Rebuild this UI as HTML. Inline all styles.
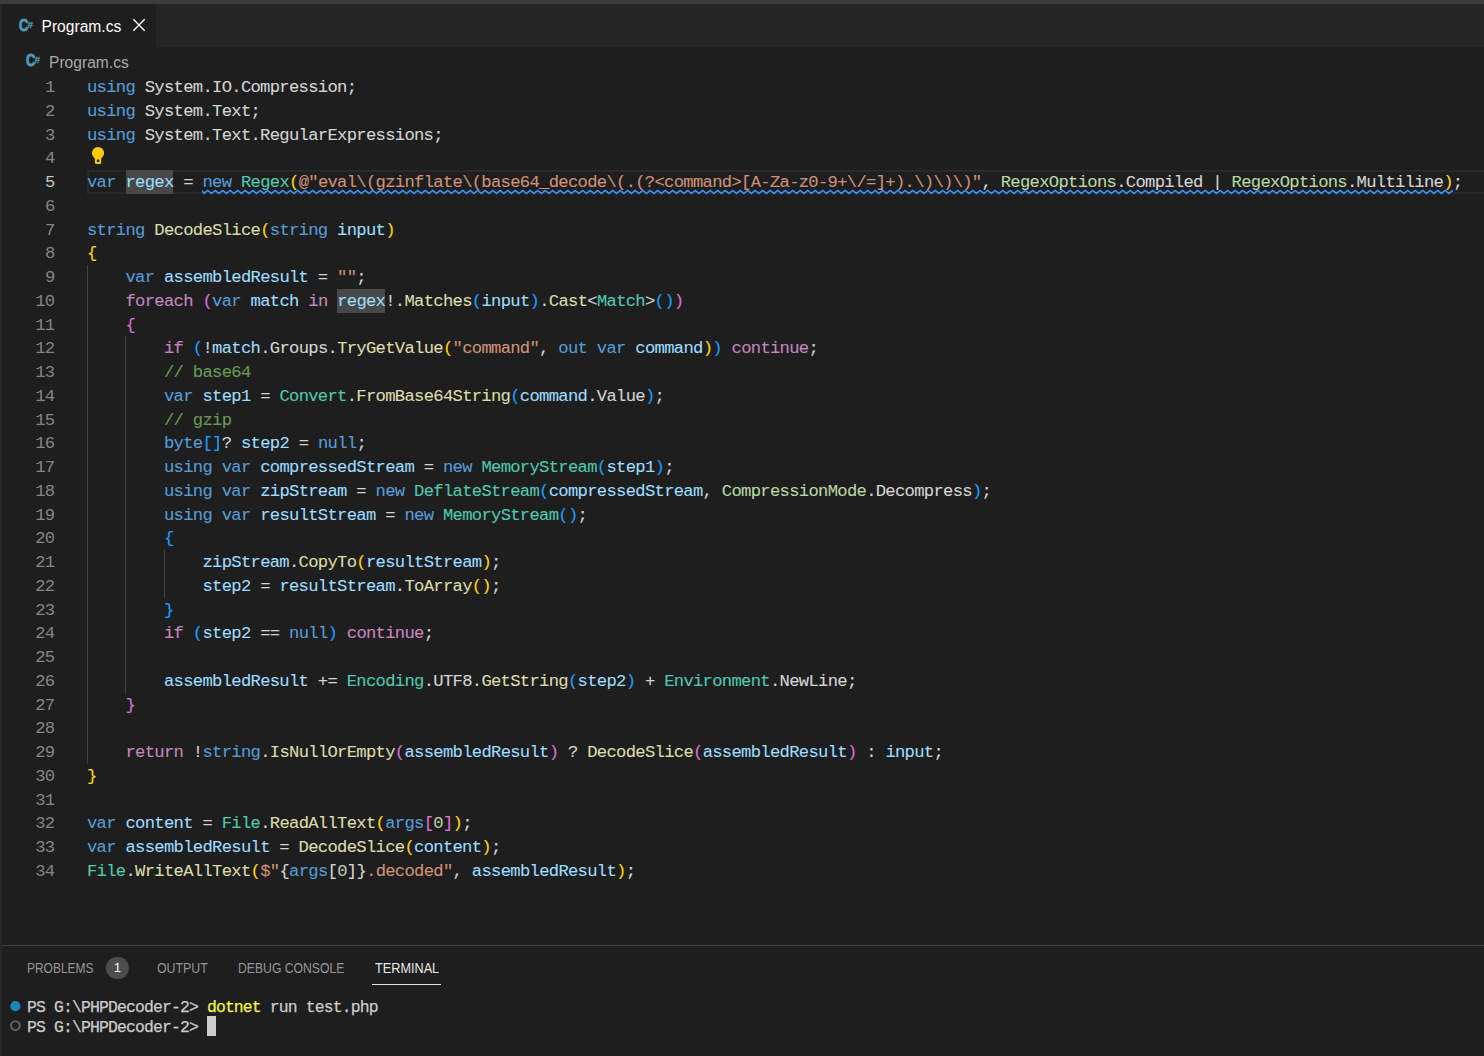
<!DOCTYPE html>
<html lang="en">
<head>
<meta charset="utf-8">
<title>Program.cs - PHPDecoder-2 - Visual Studio Code</title>
<style>
html,body{margin:0;padding:0;}
body{width:1484px;height:1056px;background:#1e1e1e;position:relative;overflow:hidden;font-family:"Liberation Sans",sans-serif;color:#d4d4d4;}
.abs{position:absolute;}
#topstrip{left:0;top:0;width:1484px;height:4px;background:#3c3c3c;}
#leftstrip{left:0;top:4px;width:2px;height:1052px;background:#252526;}
#tabbar{left:2px;top:4px;width:1482px;height:43px;background:#252526;}
#tab{left:2px;top:4px;width:154px;height:43px;background:#1e1e1e;}
.ui{font-family:"Liberation Sans",sans-serif;white-space:pre;}
#tabtitle{left:41.5px;top:17.45px;font-size:15.6px;line-height:20px;color:#ffffff;}
#crumb{left:49px;top:52.6px;font-size:15.6px;line-height:20px;color:#a9a9a9;}
.csicon{font-family:"Liberation Sans",sans-serif;font-weight:bold;fill:#519aba;}
#gutter{left:0;top:76.1px;width:54.5px;}
.lnum{height:23.75px;line-height:23.75px;text-align:right;color:#858585;font-family:"Liberation Mono",monospace;font-size:17.2px;letter-spacing:-0.6967px;white-space:pre;}
.lnum.act{color:#c6c6c6;}
#code{left:87px;top:76.1px;width:1397px;}
.ln{height:23.75px;line-height:23.75px;font-family:"Liberation Mono",monospace;font-size:17.2px;letter-spacing:-0.6967px;white-space:pre;color:#d4d4d4;-webkit-text-stroke:0.1px currentColor;}
.k{color:#569cd6}.c{color:#c586c0}.t{color:#4ec9b0}.f{color:#dcdcaa}.v{color:#9cdcfe}.s{color:#ce9178}.m{color:#6a9955}.n{color:#b5cea8}.e{color:#b8d7a3}
.b1{color:#ffd700}.b2{color:#da70d6}.b3{color:#179fff}
.hlr{background:#484848;height:23.75px;}
#curline{left:87px;top:170px;width:1400px;height:19.5px;border:2.25px solid #292929;}
.guide{width:1.4px;background:#424242;}
#panelborder{left:2px;top:945px;width:1482px;height:1px;background:#414141;}
.ptab{font-size:13.8px;line-height:18px;top:959.5px;color:#969696;transform-origin:0 50%;}
#badge{left:106.3px;top:956.7px;width:22.6px;height:22.6px;border-radius:12px;background:#4d4d4d;color:#ffffff;font-size:12.5px;line-height:22.6px;text-align:center;}
#termul{left:372px;top:983.6px;width:69px;height:1.4px;background:#e7e7e7;}
.term{font-family:"Liberation Mono",monospace;font-size:16.4px;letter-spacing:-0.842px;line-height:20px;white-space:pre;color:#cccccc;left:27px;-webkit-text-stroke:0.25px currentColor;}
.y{color:#f5f543}
#cursor{left:207px;top:1016px;width:9px;height:20px;background:#cccccc;}
</style>
</head>
<body>
<div id="topstrip" class="abs"></div>
<div id="leftstrip" class="abs"></div>
<div id="tabbar" class="abs"></div>
<div id="tab" class="abs"></div>
<svg class="abs" style="left:17px;top:15.4px" width="20" height="20" viewBox="0 0 20 20"><text class="csicon" transform="translate(1.9 15.95) scale(0.8 1)" x="0" y="0" font-size="16.2" stroke="#519aba" stroke-width="0.9" stroke-linejoin="round">C</text><text class="csicon" x="10.5" y="12.7" font-size="9.8" stroke="#519aba" stroke-width="0.3">#</text></svg>
<div id="tabtitle" class="abs ui">Program.cs</div>
<svg class="abs" style="left:132px;top:18px" width="14" height="14" viewBox="0 0 14 14"><path d="M1.3 1.3 L12.7 12.7 M12.7 1.3 L1.3 12.7" stroke="#ffffff" stroke-width="1.4" fill="none"/></svg>

<svg class="abs" style="left:23.9px;top:50.4px" width="20" height="20" viewBox="0 0 20 20"><text class="csicon" transform="translate(1.9 15.95) scale(0.8 1)" x="0" y="0" font-size="16.2" stroke="#519aba" stroke-width="0.9" stroke-linejoin="round">C</text><text class="csicon" x="10.5" y="12.7" font-size="9.8" stroke="#519aba" stroke-width="0.3">#</text></svg>
<div id="crumb" class="abs ui">Program.cs</div>

<div id="curline" class="abs"></div>
<div class="abs hlr" style="left:125.7px;top:170px;width:47.6px"></div>
<div class="abs hlr" style="left:337.2px;top:288.75px;width:48.1px"></div>
<div class="abs guide" style="left:87.1px;top:265px;height:498.75px"></div>
<div class="abs guide" style="left:125.1px;top:336.25px;height:356.25px"></div>
<div class="abs guide" style="left:163.7px;top:550px;height:47.5px"></div>

<svg class="abs" style="left:202.1px;top:189px" width="1251.3" height="6" viewBox="0 0 1251.3 6"><path d="M0 1.4 L1.95 4.4 L5.7 1.4 L9.45 4.4 L13.2 1.4 L16.95 4.4 L20.7 1.4 L24.45 4.4 L28.2 1.4 L31.95 4.4 L35.7 1.4 L39.45 4.4 L43.2 1.4 L46.95 4.4 L50.7 1.4 L54.45 4.4 L58.2 1.4 L61.95 4.4 L65.7 1.4 L69.45 4.4 L73.2 1.4 L76.95 4.4 L80.7 1.4 L84.45 4.4 L88.2 1.4 L91.95 4.4 L95.7 1.4 L99.45 4.4 L103.2 1.4 L106.95 4.4 L110.7 1.4 L114.45 4.4 L118.2 1.4 L121.95 4.4 L125.7 1.4 L129.45 4.4 L133.2 1.4 L136.95 4.4 L140.7 1.4 L144.45 4.4 L148.2 1.4 L151.95 4.4 L155.7 1.4 L159.45 4.4 L163.2 1.4 L166.95 4.4 L170.7 1.4 L174.45 4.4 L178.2 1.4 L181.95 4.4 L185.7 1.4 L189.45 4.4 L193.2 1.4 L196.95 4.4 L200.7 1.4 L204.45 4.4 L208.2 1.4 L211.95 4.4 L215.7 1.4 L219.45 4.4 L223.2 1.4 L226.95 4.4 L230.7 1.4 L234.45 4.4 L238.2 1.4 L241.95 4.4 L245.7 1.4 L249.45 4.4 L253.2 1.4 L256.95 4.4 L260.7 1.4 L264.45 4.4 L268.2 1.4 L271.95 4.4 L275.7 1.4 L279.45 4.4 L283.2 1.4 L286.95 4.4 L290.7 1.4 L294.45 4.4 L298.2 1.4 L301.95 4.4 L305.7 1.4 L309.45 4.4 L313.2 1.4 L316.95 4.4 L320.7 1.4 L324.45 4.4 L328.2 1.4 L331.95 4.4 L335.7 1.4 L339.45 4.4 L343.2 1.4 L346.95 4.4 L350.7 1.4 L354.45 4.4 L358.2 1.4 L361.95 4.4 L365.7 1.4 L369.45 4.4 L373.2 1.4 L376.95 4.4 L380.7 1.4 L384.45 4.4 L388.2 1.4 L391.95 4.4 L395.7 1.4 L399.45 4.4 L403.2 1.4 L406.95 4.4 L410.7 1.4 L414.45 4.4 L418.2 1.4 L421.95 4.4 L425.7 1.4 L429.45 4.4 L433.2 1.4 L436.95 4.4 L440.7 1.4 L444.45 4.4 L448.2 1.4 L451.95 4.4 L455.7 1.4 L459.45 4.4 L463.2 1.4 L466.95 4.4 L470.7 1.4 L474.45 4.4 L478.2 1.4 L481.95 4.4 L485.7 1.4 L489.45 4.4 L493.2 1.4 L496.95 4.4 L500.7 1.4 L504.45 4.4 L508.2 1.4 L511.95 4.4 L515.7 1.4 L519.45 4.4 L523.2 1.4 L526.95 4.4 L530.7 1.4 L534.45 4.4 L538.2 1.4 L541.95 4.4 L545.7 1.4 L549.45 4.4 L553.2 1.4 L556.95 4.4 L560.7 1.4 L564.45 4.4 L568.2 1.4 L571.95 4.4 L575.7 1.4 L579.45 4.4 L583.2 1.4 L586.95 4.4 L590.7 1.4 L594.45 4.4 L598.2 1.4 L601.95 4.4 L605.7 1.4 L609.45 4.4 L613.2 1.4 L616.95 4.4 L620.7 1.4 L624.45 4.4 L628.2 1.4 L631.95 4.4 L635.7 1.4 L639.45 4.4 L643.2 1.4 L646.95 4.4 L650.7 1.4 L654.45 4.4 L658.2 1.4 L661.95 4.4 L665.7 1.4 L669.45 4.4 L673.2 1.4 L676.95 4.4 L680.7 1.4 L684.45 4.4 L688.2 1.4 L691.95 4.4 L695.7 1.4 L699.45 4.4 L703.2 1.4 L706.95 4.4 L710.7 1.4 L714.45 4.4 L718.2 1.4 L721.95 4.4 L725.7 1.4 L729.45 4.4 L733.2 1.4 L736.95 4.4 L740.7 1.4 L744.45 4.4 L748.2 1.4 L751.95 4.4 L755.7 1.4 L759.45 4.4 L763.2 1.4 L766.95 4.4 L770.7 1.4 L774.45 4.4 L778.2 1.4 L781.95 4.4 L785.7 1.4 L789.45 4.4 L793.2 1.4 L796.95 4.4 L800.7 1.4 L804.45 4.4 L808.2 1.4 L811.95 4.4 L815.7 1.4 L819.45 4.4 L823.2 1.4 L826.95 4.4 L830.7 1.4 L834.45 4.4 L838.2 1.4 L841.95 4.4 L845.7 1.4 L849.45 4.4 L853.2 1.4 L856.95 4.4 L860.7 1.4 L864.45 4.4 L868.2 1.4 L871.95 4.4 L875.7 1.4 L879.45 4.4 L883.2 1.4 L886.95 4.4 L890.7 1.4 L894.45 4.4 L898.2 1.4 L901.95 4.4 L905.7 1.4 L909.45 4.4 L913.2 1.4 L916.95 4.4 L920.7 1.4 L924.45 4.4 L928.2 1.4 L931.95 4.4 L935.7 1.4 L939.45 4.4 L943.2 1.4 L946.95 4.4 L950.7 1.4 L954.45 4.4 L958.2 1.4 L961.95 4.4 L965.7 1.4 L969.45 4.4 L973.2 1.4 L976.95 4.4 L980.7 1.4 L984.45 4.4 L988.2 1.4 L991.95 4.4 L995.7 1.4 L999.45 4.4 L1003.2 1.4 L1006.95 4.4 L1010.7 1.4 L1014.45 4.4 L1018.2 1.4 L1021.95 4.4 L1025.7 1.4 L1029.45 4.4 L1033.2 1.4 L1036.95 4.4 L1040.7 1.4 L1044.45 4.4 L1048.2 1.4 L1051.95 4.4 L1055.7 1.4 L1059.45 4.4 L1063.2 1.4 L1066.95 4.4 L1070.7 1.4 L1074.45 4.4 L1078.2 1.4 L1081.95 4.4 L1085.7 1.4 L1089.45 4.4 L1093.2 1.4 L1096.95 4.4 L1100.7 1.4 L1104.45 4.4 L1108.2 1.4 L1111.95 4.4 L1115.7 1.4 L1119.45 4.4 L1123.2 1.4 L1126.95 4.4 L1130.7 1.4 L1134.45 4.4 L1138.2 1.4 L1141.95 4.4 L1145.7 1.4 L1149.45 4.4 L1153.2 1.4 L1156.95 4.4 L1160.7 1.4 L1164.45 4.4 L1168.2 1.4 L1171.95 4.4 L1175.7 1.4 L1179.45 4.4 L1183.2 1.4 L1186.95 4.4 L1190.7 1.4 L1194.45 4.4 L1198.2 1.4 L1201.95 4.4 L1205.7 1.4 L1209.45 4.4 L1213.2 1.4 L1216.95 4.4 L1220.7 1.4 L1224.45 4.4 L1228.2 1.4 L1231.95 4.4 L1235.7 1.4 L1239.45 4.4 L1243.2 1.4 L1246.95 4.4 L1250.7 1.4 L1254.45 4.4 L1258.2 1.4" fill="none" stroke="#3794ff" stroke-width="1.55" stroke-linejoin="miter"/></svg>
<div id="gutter" class="abs">
<div class="lnum">1</div>
<div class="lnum">2</div>
<div class="lnum">3</div>
<div class="lnum">4</div>
<div class="lnum act">5</div>
<div class="lnum">6</div>
<div class="lnum">7</div>
<div class="lnum">8</div>
<div class="lnum">9</div>
<div class="lnum">10</div>
<div class="lnum">11</div>
<div class="lnum">12</div>
<div class="lnum">13</div>
<div class="lnum">14</div>
<div class="lnum">15</div>
<div class="lnum">16</div>
<div class="lnum">17</div>
<div class="lnum">18</div>
<div class="lnum">19</div>
<div class="lnum">20</div>
<div class="lnum">21</div>
<div class="lnum">22</div>
<div class="lnum">23</div>
<div class="lnum">24</div>
<div class="lnum">25</div>
<div class="lnum">26</div>
<div class="lnum">27</div>
<div class="lnum">28</div>
<div class="lnum">29</div>
<div class="lnum">30</div>
<div class="lnum">31</div>
<div class="lnum">32</div>
<div class="lnum">33</div>
<div class="lnum">34</div>
</div>
<div id="code" class="abs">
<div class="ln"><span class="k">using</span> System.IO.Compression;</div>
<div class="ln"><span class="k">using</span> System.Text;</div>
<div class="ln"><span class="k">using</span> System.Text.RegularExpressions;</div>
<div class="ln"></div>
<div class="ln"><span class="k">var</span> <span class="v hl">regex</span> = <span class="sq"><span class="k">new</span> <span class="t">Regex</span><span class="b1">(</span><span class="s">@"eval\(gzinflate\(base64_decode\(.(?&lt;command&gt;[A-Za-z0-9+\/=]+).\)\)\)"</span>, <span class="e">RegexOptions</span>.Compiled | <span class="e">RegexOptions</span>.Multiline<span class="b1">)</span></span>;</div>
<div class="ln"></div>
<div class="ln"><span class="k">string</span> <span class="f">DecodeSlice</span><span class="b1">(</span><span class="k">string</span> <span class="v">input</span><span class="b1">)</span></div>
<div class="ln"><span class="b1">{</span></div>
<div class="ln">    <span class="k">var</span> <span class="v">assembledResult</span> = <span class="s">""</span>;</div>
<div class="ln">    <span class="c">foreach</span> <span class="b2">(</span><span class="k">var</span> <span class="v">match</span> <span class="c">in</span> <span class="v hl">regex</span>!.<span class="f">Matches</span><span class="b3">(</span><span class="v">input</span><span class="b3">)</span>.<span class="f">Cast</span>&lt;<span class="t">Match</span>&gt;<span class="b3">()</span><span class="b2">)</span></div>
<div class="ln">    <span class="b2">{</span></div>
<div class="ln">        <span class="c">if</span> <span class="b3">(</span>!<span class="v">match</span>.Groups.<span class="f">TryGetValue</span><span class="b1">(</span><span class="s">"command"</span>, <span class="k">out</span> <span class="k">var</span> <span class="v">command</span><span class="b1">)</span><span class="b3">)</span> <span class="c">continue</span>;</div>
<div class="ln">        <span class="m">// base64</span></div>
<div class="ln">        <span class="k">var</span> <span class="v">step1</span> = <span class="t">Convert</span>.<span class="f">FromBase64String</span><span class="b3">(</span><span class="v">command</span>.Value<span class="b3">)</span>;</div>
<div class="ln">        <span class="m">// gzip</span></div>
<div class="ln">        <span class="k">byte</span><span class="b3">[]</span>? <span class="v">step2</span> = <span class="k">null</span>;</div>
<div class="ln">        <span class="k">using</span> <span class="k">var</span> <span class="v">compressedStream</span> = <span class="k">new</span> <span class="t">MemoryStream</span><span class="b3">(</span><span class="v">step1</span><span class="b3">)</span>;</div>
<div class="ln">        <span class="k">using</span> <span class="k">var</span> <span class="v">zipStream</span> = <span class="k">new</span> <span class="t">DeflateStream</span><span class="b3">(</span><span class="v">compressedStream</span>, <span class="e">CompressionMode</span>.Decompress<span class="b3">)</span>;</div>
<div class="ln">        <span class="k">using</span> <span class="k">var</span> <span class="v">resultStream</span> = <span class="k">new</span> <span class="t">MemoryStream</span><span class="b3">()</span>;</div>
<div class="ln">        <span class="b3">{</span></div>
<div class="ln">            <span class="v">zipStream</span>.<span class="f">CopyTo</span><span class="b1">(</span><span class="v">resultStream</span><span class="b1">)</span>;</div>
<div class="ln">            <span class="v">step2</span> = <span class="v">resultStream</span>.<span class="f">ToArray</span><span class="b1">()</span>;</div>
<div class="ln">        <span class="b3">}</span></div>
<div class="ln">        <span class="c">if</span> <span class="b3">(</span><span class="v">step2</span> == <span class="k">null</span><span class="b3">)</span> <span class="c">continue</span>;</div>
<div class="ln"></div>
<div class="ln">        <span class="v">assembledResult</span> += <span class="t">Encoding</span>.UTF8.<span class="f">GetString</span><span class="b3">(</span><span class="v">step2</span><span class="b3">)</span> + <span class="t">Environment</span>.NewLine;</div>
<div class="ln">    <span class="b2">}</span></div>
<div class="ln"></div>
<div class="ln">    <span class="c">return</span> !<span class="k">string</span>.<span class="f">IsNullOrEmpty</span><span class="b2">(</span><span class="v">assembledResult</span><span class="b2">)</span> ? <span class="f">DecodeSlice</span><span class="b2">(</span><span class="v">assembledResult</span><span class="b2">)</span> : <span class="v">input</span>;</div>
<div class="ln"><span class="b1">}</span></div>
<div class="ln"></div>
<div class="ln"><span class="k">var</span> <span class="v">content</span> = <span class="t">File</span>.<span class="f">ReadAllText</span><span class="b1">(</span><span class="k">args</span><span class="b2">[</span><span class="n">0</span><span class="b2">]</span><span class="b1">)</span>;</div>
<div class="ln"><span class="k">var</span> <span class="v">assembledResult</span> = <span class="f">DecodeSlice</span><span class="b1">(</span><span class="v">content</span><span class="b1">)</span>;</div>
<div class="ln"><span class="t">File</span>.<span class="f">WriteAllText</span><span class="b1">(</span><span class="s">$"</span>{<span class="k">args</span>[<span class="n">0</span>]}<span class="s">.decoded"</span>, <span class="v">assembledResult</span><span class="b1">)</span>;</div>
</div>

<svg class="abs" style="left:90px;top:146px" width="16" height="19" viewBox="0 0 16 19"><circle cx="8.05" cy="7" r="6.1" fill="#ffcc00"/><path d="M4.300 10.500h7.500l-0.600 2v4.300c0 0.600-0.500 1.100-1.100 1.100h-4.100c-0.600 0-1.100-0.500-1.100-1.100v-4.300z" fill="#ffcc00"/><rect x="6.900" y="13.500" width="2.400" height="2.500" fill="#1e1e1e"/></svg>

<div id="panelborder" class="abs"></div>
<div class="abs ui ptab" style="left:27px;transform:scaleX(0.867)">PROBLEMS</div>
<div id="badge" class="abs ui">1</div>
<div class="abs ui ptab" style="left:156.5px;transform:scaleX(0.896)">OUTPUT</div>
<div class="abs ui ptab" style="left:238px;transform:scaleX(0.884)">DEBUG CONSOLE</div>
<div class="abs ui ptab" style="left:374.5px;color:#e7e7e7;transform:scaleX(0.92)">TERMINAL</div>
<div id="termul" class="abs"></div>

<svg class="abs" style="left:9px;top:1001px" width="12" height="32" viewBox="0 0 12 32"><circle cx="6.4" cy="5.2" r="5.1" fill="#1b85b8"/><circle cx="6.4" cy="24.6" r="4.4" fill="none" stroke="#606060" stroke-width="2"/></svg>
<div class="abs term" style="top:998.3px">PS G:\PHPDecoder-2&gt; <span class="y">dotnet</span> run test.php</div>
<div class="abs term" style="top:1018px">PS G:\PHPDecoder-2&gt; </div>
<div id="cursor" class="abs"></div>
</body>
</html>
